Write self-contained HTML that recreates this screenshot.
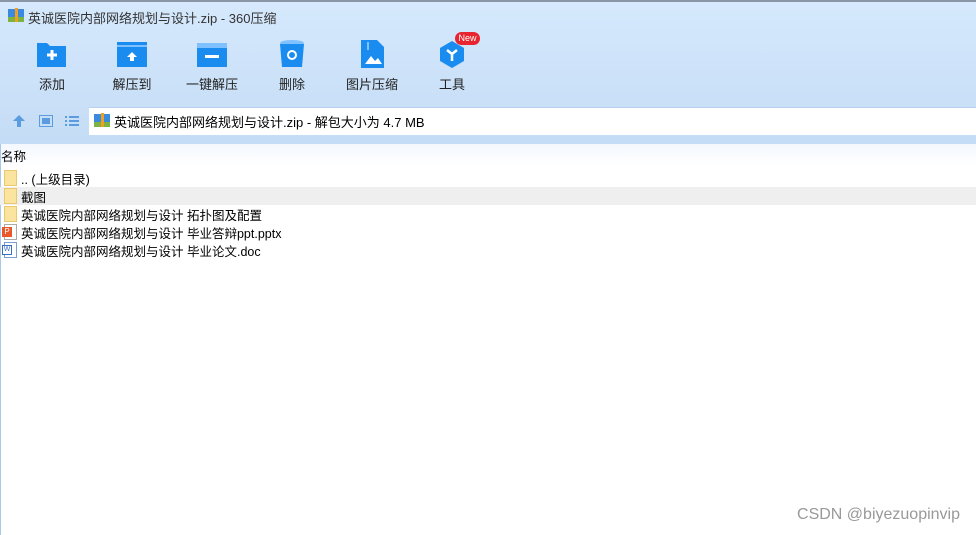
<!DOCTYPE html>
<html><head><meta charset="utf-8"><style>
*{margin:0;padding:0;box-sizing:border-box}
body{width:976px;height:535px;overflow:hidden;background:#fff;font-family:"Liberation Sans","Noto Sans CJK SC",sans-serif;position:relative;font-size:12px;color:#000}
.top{position:absolute;left:0;top:0;width:976px;height:144px;background:linear-gradient(#d6e9fd,#c4dcf5)}
.title{position:absolute;left:28px;top:8px;font-size:13px;color:#333}
.tb{position:absolute;top:40px;width:60px;text-align:center;font-size:13px;color:#222}
.tb svg{display:block;margin:0 auto 6px}
.addr{position:absolute;left:89px;top:107px;width:887px;height:28px;background:#fff;border-top:1px solid #b9d3ef}
.addr span{position:absolute;left:25px;top:4px;font-size:13px}
.hdr{position:absolute;left:0;top:144px;width:976px;height:22px;background:linear-gradient(#f3f8fe,#fff)}
.row{position:absolute;left:0;width:976px;height:18px;font-size:12.5px}
.row span{position:absolute;left:21px;top:0px}
.ic{position:absolute;left:4px;top:1px;width:13px;height:16px}
.wm{position:absolute;right:16px;top:506px;font-size:16px;color:#999}
</style></head><body>
<div class="top"></div>
<div style="position:absolute;left:0;top:0;width:976px;height:2px;background:#8a96a4"></div>
<svg style="position:absolute;left:8px;top:8px" width="16" height="15"><rect x="0" y="1" width="16" height="13" fill="#3a8be0"/><rect x="0" y="9" width="16" height="5" fill="#7cb342"/><rect x="7" y="0" width="3" height="14" fill="#f0a020"/></svg>
<div class="title">英诚医院内部网络规划与设计.zip - 360压缩</div>

<div class="tb" style="left:22px"><svg width="32" height="28"><path d="M1 3h10l3 3h16v21H1z" fill="#1a8cf0"/><path d="M11 15h10M16 10v10" stroke="#fff" stroke-width="3"/></svg>添加</div>
<div class="tb" style="left:102px"><svg width="32" height="28"><path d="M1 2h30v25H1z" fill="#1a8cf0"/><rect x="1" y="5" width="30" height="2" fill="#7fc0ff"/><path d="M11 17l5-5 5 5h-3v4h-4v-4z" fill="#fff"/></svg>解压到</div>
<div class="tb" style="left:182px"><svg width="32" height="28"><path d="M1 3h30v24H1z" fill="#1a8cf0"/><rect x="1" y="3" width="30" height="5" fill="#7fc0ff"/><rect x="9" y="15" width="14" height="3" fill="#fff"/></svg>一键解压</div>
<div class="tb" style="left:262px"><svg width="32" height="28"><ellipse cx="16" cy="3" rx="12" ry="3" fill="#7fc0ff"/><path d="M4 4h24l-2 23H6z" fill="#1a8cf0"/><circle cx="16" cy="15" r="4" fill="none" stroke="#fff" stroke-width="2"/></svg>删除</div>
<div class="tb" style="left:342px"><svg width="32" height="28"><path d="M5 0h16l7 7v21H5z" fill="#1a8cf0"/><path d="M9 24l6-8 4 5 3-3 4 6z" fill="#fff"/><rect x="11" y="2" width="2" height="8" fill="#7fc0ff"/></svg>图片压缩</div>
<div class="tb" style="left:422px"><svg width="32" height="28"><path d="M16 1l12 7v13l-12 7-12-7V8z" fill="#1a8cf0"/><path d="M11 10l5 4 5-4M16 14v7" stroke="#fff" stroke-width="2.5" fill="none"/></svg>工具</div>
<div style="position:absolute;left:455px;top:32px;width:25px;height:13px;border-radius:7px;background:#e8242e;color:#fff;font-size:9px;text-align:center;line-height:13px">New</div>

<svg style="position:absolute;left:12px;top:114px" width="14" height="14"><path d="M7 1l6 6H9v6H5V7H1z" fill="#5b9be0"/></svg>
<svg style="position:absolute;left:39px;top:115px" width="14" height="12"><rect x="0.5" y="0.5" width="13" height="11" fill="none" stroke="#5b9be0"/><rect x="3" y="3" width="8" height="6" fill="#5b9be0"/></svg>
<svg style="position:absolute;left:65px;top:115px" width="14" height="12"><g fill="#5b9be0"><rect x="0" y="1" width="2" height="2"/><rect x="4" y="1" width="10" height="2"/><rect x="0" y="5" width="2" height="2"/><rect x="4" y="5" width="10" height="2"/><rect x="0" y="9" width="2" height="2"/><rect x="4" y="9" width="10" height="2"/></g></svg>
<div class="addr"><svg style="position:absolute;left:5px;top:5px" width="16" height="15"><rect x="0" y="1" width="16" height="13" fill="#3a8be0"/><rect x="0" y="9" width="16" height="5" fill="#7cb342"/><rect x="7" y="0" width="3" height="14" fill="#f0a020"/></svg><span>英诚医院内部网络规划与设计.zip - 解包大小为 4.7 MB</span></div>
<div class="hdr"><span style="position:absolute;left:1px;top:2px;font-size:12.5px">名称</span></div>
<div style="position:absolute;left:0;top:144px;width:1px;height:391px;background:#a9c8ec"></div>

<div class="row" style="top:169px"><div class="ic" style="background:#fbe3a0;border:1px solid #e9c870"></div><span>.. (上级目录)</span></div>
<div class="row" style="top:187px;background:#efefef"><div class="ic" style="background:#fbe3a0;border:1px solid #e9c870"></div><span>截图</span></div>
<div class="row" style="top:205px"><div class="ic" style="background:#fbe3a0;border:1px solid #e9c870"></div><span>英诚医院内部网络规划与设计 拓扑图及配置</span></div>
<div class="row" style="top:223px"><div class="ic" style="background:#fff;border:1px solid #aaa"><div style="position:absolute;left:-3px;top:2px;width:10px;height:10px;background:#e8582a;color:#fff;font-size:8px;line-height:10px;text-align:center">P</div></div><span>英诚医院内部网络规划与设计 毕业答辩ppt.pptx</span></div>
<div class="row" style="top:241px"><div class="ic" style="background:#fff;border:1px solid #7a9fd0"><div style="position:absolute;left:-3px;top:2px;width:10px;height:10px;background:#fff;border:1px solid #3a6fc0;color:#3a6fc0;font-size:7px;line-height:8px;text-align:center">W</div></div><span>英诚医院内部网络规划与设计 毕业论文.doc</span></div>
<div class="wm">CSDN @biyezuopinvip</div>
</body></html>
